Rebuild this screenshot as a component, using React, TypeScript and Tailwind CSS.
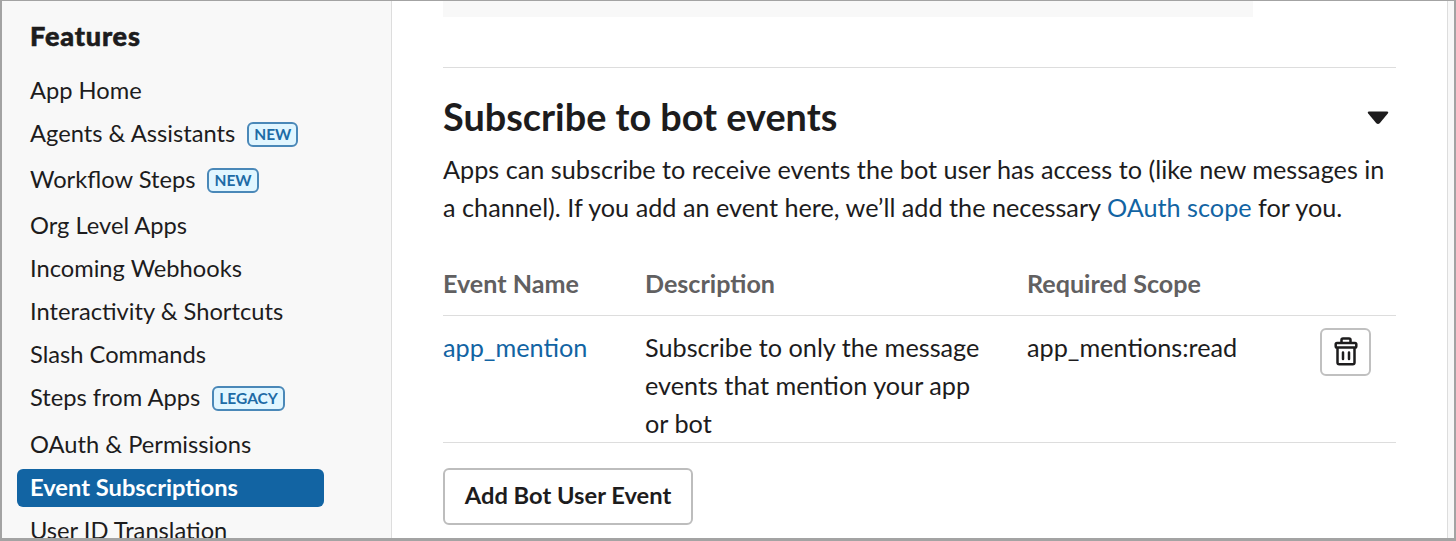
import React from "react";

type Item = { label: string; tag?: string; active?: boolean; h: string };

const items: Item[] = [
  { label: "App Home", h: "h-[43px]" },
  { label: "Agents & Assistants", tag: "NEW", h: "h-[46px]" },
  { label: "Workflow Steps", tag: "NEW", h: "h-[46px]" },
  { label: "Org Level Apps", h: "h-[43px]" },
  { label: "Incoming Webhooks", h: "h-[43px]" },
  { label: "Interactivity & Shortcuts", h: "h-[43px]" },
  { label: "Slash Commands", h: "h-[43px]" },
  { label: "Steps from Apps", tag: "LEGACY", h: "h-[47px]" },
  { label: "OAuth & Permissions", h: "h-[43px]" },
  { label: "Event Subscriptions", active: true, h: "h-[43px]" },
  { label: "User ID Translation", h: "h-[43px]" },
];

function NavItem({ label, tag, active, h }: Item) {
  return (
    <li className={`shrink-0 ${h}`}>
      <a className={`flex h-[38px] w-[307px] items-center rounded-[6px] pl-[13px] whitespace-nowrap ${active ? "bg-[#1264a3] font-bold text-white" : ""}`}>
        {label}
        {tag && (
          <span className="ml-[12px] flex h-[25px] items-center rounded-[6px] border-2 border-[#4a88b8] bg-[#e1f6ff] px-[5px] pt-px text-[15.5px] font-bold text-[#1d6ba6]">{tag}</span>
        )}
      </a>
    </li>
  );
}

export default function App() {
  return (
    <div className="flex h-[541px] w-[1456px] overflow-hidden border-t border-r-2 border-b-3 border-l-2 border-[#a3a3a3] bg-white font-['Lato',sans-serif] text-[25.24px] text-[#1d1c1d]">
      <nav className="w-[390px] shrink-0 overflow-hidden border-r border-[#ddd] bg-[#f8f8f8] pl-[15px] text-[23.7px]">
        <h2 className="mt-[16px] h-[55px] pl-[13px] text-[27px] leading-[38px] font-black tracking-[0.85px] [-webkit-text-stroke:0.6px_#1d1c1d]">Features</h2>
        <ul className="flex flex-col">{items.map((i) => <NavItem key={i.label} {...i} />)}</ul>
      </nav>
      <main className="w-[1004px] shrink-0 pl-[51px]">
        <div className="h-[16px] w-[810px] bg-[#f8f8f8]" />
        <section className="mt-[50px] border-t border-[#ddd]">
          <div className="mt-[24px] flex h-[50px] items-center justify-between pr-[7px]">
            <h1 className="text-[37.8px] font-bold">Subscribe to bot events</h1>
            <svg className="mt-[2px]" width="22" height="14" viewBox="0 0 22 14"><path d="M2 .5h18q2 0 .8 2l-8.100 9.700q-1.700 1.600-3.400 0l-8.100-9.700Q0 .5 2 .5Z" fill="#1d1c1d" /></svg>
          </div>
          <p className="mt-2 leading-[38px] whitespace-nowrap">Apps can subscribe to receive events the bot user has access to (like new messages in<br />a channel). If you add an event here, we’ll add the necessary <a className="text-[#1264a3]">OAuth scope</a> for you.</p>
          <div className="mt-[38px] grid h-[52px] grid-cols-[202px_382px_1fr] border-b border-[#ddd] text-[25.1px] leading-[38px] font-bold text-[#616061]"><span>Event Name</span><span>Description</span><span>Required Scope</span></div>
          <div className="grid h-[127px] grid-cols-[202px_382px_293px_1fr] border-b border-[#ddd] pt-[12px] leading-[38px]">
            <a className="text-[#1264a3]">app_mention</a>
            <p className="whitespace-nowrap">Subscribe to only the message<br />events that mention your app<br />or bot</p>
            <span>app_mentions:read</span>
            <button className="flex h-12 w-[51px] items-center justify-center rounded-[6px] border-2 border-[#c0c0c0]">
              <svg className="mb-[2px]" width="24" height="30" viewBox="0 0 24 30" fill="none" stroke="#1d1c1d" strokeWidth="2.5" strokeLinecap="round" strokeLinejoin="round"><path d="M7.500 7V4q0-1.500 1.500-1.500h6q1.500 0 1.500 1.500v3M3 7h18q1.300 0 1.300 1.300v1.900q0 1.300-1.300 1.300H3q-1.300 0-1.300-1.300V8.300Q1.700 7 3 7ZM3.500 12v14.500q0 1.800 1.800 1.800h13.400q1.800 0 1.800-1.800V12M9 16.500v6.500M15 16.500v6.500" /></svg>
            </button>
          </div>
          <button className="mt-[25px] flex h-[57px] w-[250px] items-center justify-center rounded-[6px] border-2 border-[#bdbdbd] pb-px text-[23.7px] font-bold">Add Bot User Event</button>
        </section>
      </main>
      <div className="ml-[51px] w-[8px] shrink-0 border-l border-[#ddd] bg-[#f8f8f8]" />
    </div>
  );
}
